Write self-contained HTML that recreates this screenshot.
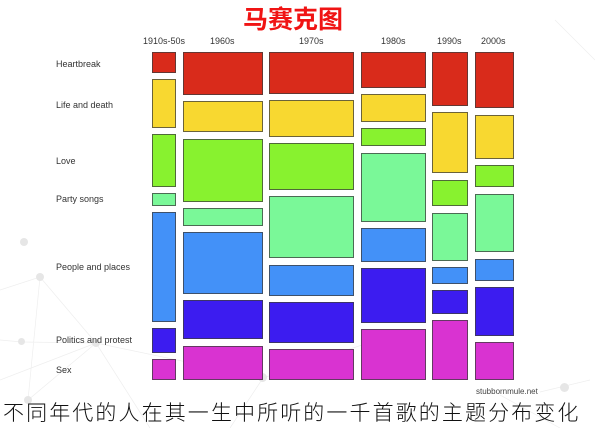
<!DOCTYPE html>
<html><head><meta charset="utf-8"><style>
html,body{margin:0;padding:0}
body{width:595px;height:428px;position:relative;background:#fff;overflow:hidden;font-family:"Liberation Sans","Noto Sans CJK SC",sans-serif}
.r{position:absolute;box-sizing:border-box;border:1px solid rgba(60,60,60,.75)}
.t{position:absolute;font-size:9px;color:#333;white-space:nowrap;line-height:10px}
.d{position:absolute;border-radius:50%;background:#e6e6e6}
.R{background:#d92b1b}.Y{background:#f8d830}.G{background:#88f22f}.T{background:#7af898}.B{background:#4391f8}.P{background:#3c1cf0}.M{background:#d933d1}
</style></head><body>
<svg style="position:absolute;left:0;top:0" width="595" height="428"><g stroke="#eee" stroke-width="0.7" fill="none">
<path d="M0 290 L40 277 L28 400 L96 343 L0 380 M40 277 L96 343 L263 378 L368 343 M96 343 L150 428 M263 378 L230 428 M0 340 L22 342 L96 343 M555 20 L595 60 M540 392 L590 380 M500 395 L560 428"/></g></svg>
<div class="d" style="left:36px;top:273px;width:8px;height:8px"></div>
<div class="d" style="left:18px;top:338px;width:7px;height:7px"></div>
<div class="d" style="left:24px;top:396px;width:8px;height:8px"></div>
<div class="d" style="left:92px;top:339px;width:8px;height:8px"></div>
<div class="d" style="left:20px;top:238px;width:8px;height:8px"></div>
<div class="d" style="left:258px;top:373px;width:9px;height:9px"></div>
<div class="d" style="left:560px;top:383px;width:9px;height:9px"></div>

<div style="position:absolute;left:243px;top:4px;font-size:25px;font-weight:bold;color:#f01414;line-height:28px;font-family:'Noto Sans CJK SC',sans-serif">马赛克图</div>

<div class="t" style="left:143px;top:36px">1910s-50s</div>
<div class="t" style="left:210px;top:36px">1960s</div>
<div class="t" style="left:299px;top:36px">1970s</div>
<div class="t" style="left:381px;top:36px">1980s</div>
<div class="t" style="left:437px;top:36px">1990s</div>
<div class="t" style="left:481px;top:36px">2000s</div>

<div class="t" style="left:56px;top:59px">Heartbreak</div>
<div class="t" style="left:56px;top:100px">Life and death</div>
<div class="t" style="left:56px;top:156px">Love</div>
<div class="t" style="left:56px;top:194px">Party songs</div>
<div class="t" style="left:56px;top:262px">People and places</div>
<div class="t" style="left:56px;top:335px">Politics and protest</div>
<div class="t" style="left:56px;top:365px">Sex</div>

<div class="r R" style="left:152px;top:52px;width:24px;height:21px"></div>
<div class="r Y" style="left:152px;top:79px;width:24px;height:49px"></div>
<div class="r G" style="left:152px;top:134px;width:24px;height:53px"></div>
<div class="r T" style="left:152px;top:193px;width:24px;height:13px"></div>
<div class="r B" style="left:152px;top:212px;width:24px;height:110px"></div>
<div class="r P" style="left:152px;top:328px;width:24px;height:25px"></div>
<div class="r M" style="left:152px;top:359px;width:24px;height:21px"></div>

<div class="r R" style="left:183px;top:52px;width:80px;height:43px"></div>
<div class="r Y" style="left:183px;top:101px;width:80px;height:31px"></div>
<div class="r G" style="left:183px;top:139px;width:80px;height:63px"></div>
<div class="r T" style="left:183px;top:208px;width:80px;height:18px"></div>
<div class="r B" style="left:183px;top:232px;width:80px;height:62px"></div>
<div class="r P" style="left:183px;top:300px;width:80px;height:39px"></div>
<div class="r M" style="left:183px;top:346px;width:80px;height:34px"></div>

<div class="r R" style="left:269px;top:52px;width:85px;height:42px"></div>
<div class="r Y" style="left:269px;top:100px;width:85px;height:37px"></div>
<div class="r G" style="left:269px;top:143px;width:85px;height:47px"></div>
<div class="r T" style="left:269px;top:196px;width:85px;height:62px"></div>
<div class="r B" style="left:269px;top:265px;width:85px;height:31px"></div>
<div class="r P" style="left:269px;top:302px;width:85px;height:41px"></div>
<div class="r M" style="left:269px;top:349px;width:85px;height:31px"></div>

<div class="r R" style="left:361px;top:52px;width:65px;height:36px"></div>
<div class="r Y" style="left:361px;top:94px;width:65px;height:28px"></div>
<div class="r G" style="left:361px;top:128px;width:65px;height:18px"></div>
<div class="r T" style="left:361px;top:153px;width:65px;height:69px"></div>
<div class="r B" style="left:361px;top:228px;width:65px;height:34px"></div>
<div class="r P" style="left:361px;top:268px;width:65px;height:55px"></div>
<div class="r M" style="left:361px;top:329px;width:65px;height:51px"></div>

<div class="r R" style="left:432px;top:52px;width:36px;height:54px"></div>
<div class="r Y" style="left:432px;top:112px;width:36px;height:61px"></div>
<div class="r G" style="left:432px;top:180px;width:36px;height:26px"></div>
<div class="r T" style="left:432px;top:213px;width:36px;height:48px"></div>
<div class="r B" style="left:432px;top:267px;width:36px;height:17px"></div>
<div class="r P" style="left:432px;top:290px;width:36px;height:24px"></div>
<div class="r M" style="left:432px;top:320px;width:36px;height:60px"></div>

<div class="r R" style="left:475px;top:52px;width:39px;height:56px"></div>
<div class="r Y" style="left:475px;top:115px;width:39px;height:44px"></div>
<div class="r G" style="left:475px;top:165px;width:39px;height:22px"></div>
<div class="r T" style="left:475px;top:194px;width:39px;height:58px"></div>
<div class="r B" style="left:475px;top:259px;width:39px;height:22px"></div>
<div class="r P" style="left:475px;top:287px;width:39px;height:49px"></div>
<div class="r M" style="left:475px;top:342px;width:39px;height:38px"></div>

<div style="position:absolute;left:476px;top:387px;font-size:8px;color:#444;line-height:10px">stubbornmule.net</div>
<div style="position:absolute;left:3px;top:399px;font-size:21px;color:#111;line-height:26px;letter-spacing:2.1px;white-space:nowrap;font-family:'Noto Sans CJK SC',sans-serif;font-weight:300">不同年代的人在其一生中所听的一千首歌的主题分布变化</div>
</body></html>
